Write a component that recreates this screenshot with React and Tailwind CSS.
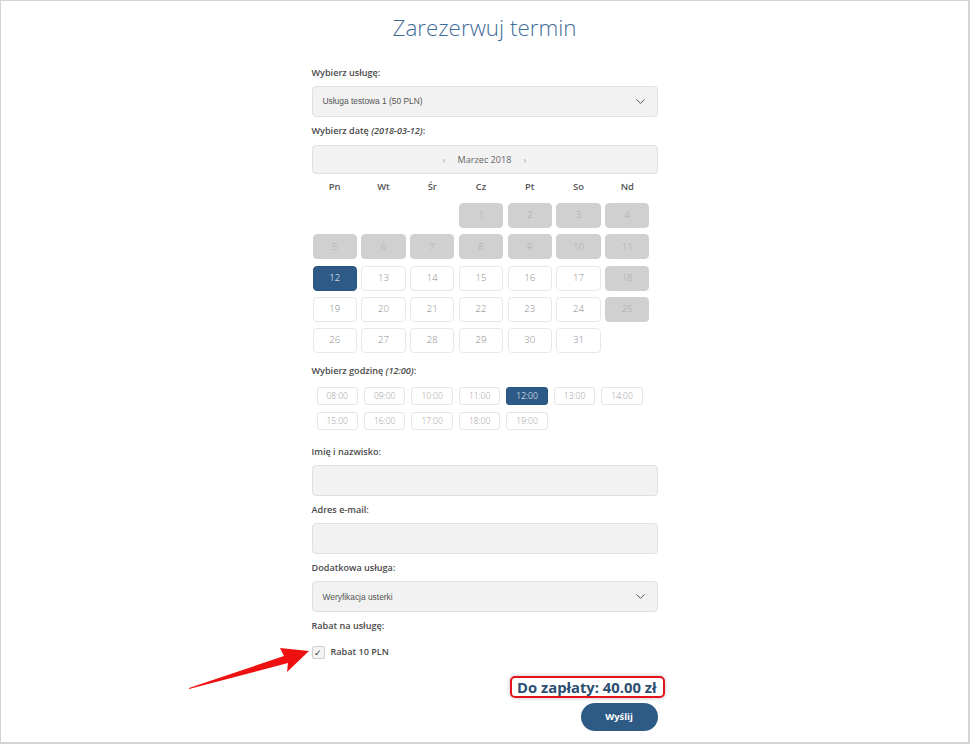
import { ChevronDown } from 'lucide-react'

const days = ['Pn', 'Wt', 'Śr', 'Cz', 'Pt', 'So', 'Nd']
const disabledDays = [1, 2, 3, 4, 5, 6, 7, 8, 9, 10, 11, 18, 25]
const hours = ['08:00', '09:00', '10:00', '11:00', '12:00', '13:00', '14:00', '15:00', '16:00', '17:00', '18:00', '19:00']

function Label({ children, className = '' }) {
  return (
    <div className={`py-[6.5px] text-[9.1px] leading-[14px] font-semibold text-[#4a4a4a] ${className}`}>
      {children}
    </div>
  )
}

function SelectBox({ value }) {
  return (
    <div className="h-[31px] flex items-center justify-between pl-[10px] pr-[9px] bg-[#f2f2f2] border border-[#e0e0e0] rounded-[4px]">
      <span className="font-['Liberation_Sans',Arial,sans-serif] text-[8.4px] text-[#555]">{value}</span>
      <ChevronDown size={15} strokeWidth={1.6} className="text-[#555]" />
    </div>
  )
}

function DayCell({ day, selected }) {
  if (!day) return <div />
  const disabled = disabledDays.includes(day)
  let cls = 'bg-white border-[#e8e8e8] text-[#8a8a8a]'
  if (disabled) cls = 'bg-[#d0d0d0] border-[#d0d0d0] text-[#ababab]'
  if (selected) cls = 'bg-[#2d5a86] border-[#2a5580] text-white'
  return (
    <div className={`h-[25px] flex items-center justify-center rounded-[4px] border text-[9.6px] font-light ${cls}`}>
      {day}
    </div>
  )
}

export default function App() {
  const cells = [null, null, null, ...Array.from({ length: 31 }, (_, i) => i + 1)]

  return (
    <div className="relative w-[970px] h-[744px] bg-white border-t border-l border-r-2 border-b-2 border-[#d4d4d4] overflow-hidden font-['Open_Sans',sans-serif]">
      <div className="w-[346px] mx-auto">
        <div className="pt-[12px] h-[58px] text-center text-[22.4px] leading-[29px] font-light text-[#3f6d99]">
          Zarezerwuj termin
        </div>

        <Label>Wybierz usługę:</Label>
        <SelectBox value="Usługa testowa 1 (50 PLN)" />

        <Label>Wybierz datę <i>(2018-03-12)</i>:</Label>
        <div className="mt-px h-[29px] flex items-center justify-center gap-[12px] bg-[#f2f2f2] border border-[#e0e0e0] rounded-[4px] text-[9.1px] text-[#666]">
          <span className="text-[#999]">‹</span>
          <span>Marzec 2018</span>
          <span className="text-[#999]">›</span>
        </div>

        <div className="mt-[6px] ml-px w-[337px] grid grid-cols-7 gap-x-[4.3px]">
          {days.map(d => (
            <div key={d} className="text-center text-[9.4px] leading-[14px] font-semibold text-[#555]">{d}</div>
          ))}
        </div>
        <div className="mt-[9px] ml-px w-[337px] grid grid-cols-7 gap-x-[4.3px] gap-y-[6.3px]">
          {cells.map((d, i) => (
            <DayCell key={i} day={d} selected={d === 12} />
          ))}
        </div>

        <Label className="mt-[4px]">Wybierz godzinę <i>(12:00)</i>:</Label>
        <div className="mt-[3px] pl-[5px] flex flex-wrap gap-x-[6.2px] gap-y-[7.3px]">
          {hours.map(h => (
            <div key={h}
              className={`w-[41.3px] h-[18px] flex items-center justify-center rounded-[3px] border text-[8.5px] font-light
                ${h === '12:00' ? 'bg-[#2d5a86] border-[#2a5580] text-white' : 'bg-white border-[#e6e6e6] text-[#999]'}`}>
              {h}
            </div>
          ))}
        </div>

        <Label className="mt-[8px]">Imię i nazwisko:</Label>
        <div className="h-[31px] bg-[#f2f2f2] border border-[#e0e0e0] rounded-[4px]" />

        <Label>Adres e-mail:</Label>
        <div className="h-[31px] bg-[#f2f2f2] border border-[#e0e0e0] rounded-[4px]" />

        <Label>Dodatkowa usługa:</Label>
        <SelectBox value="Weryfikacja usterki" />

        <Label>Rabat na usługę:</Label>
        <div className="mt-[6px] flex items-center gap-[6px]">
          <div className="w-[13px] h-[13px] flex items-center justify-center rounded-[2px] border border-[#cfcfcf] bg-[#f4f4f4] text-[9px] leading-none text-[#333]">
            ✓
          </div>
          <span className="text-[9.1px] font-semibold text-[#4a4a4a]">Rabat 10 PLN</span>
        </div>

        <div className="mt-[17px] flex justify-end">
          <span className="relative mr-px text-[14.8px] leading-[22px] font-bold text-[#2b4e72]">
            Do zapłaty: 40.00 zł
            <span className="absolute -left-[7px] -right-[8px] top-0 bottom-0 border-2 border-[#e3141b] rounded-[5px] shadow-[0_0_4px_rgba(0,0,0,0.25)]" />
          </span>
        </div>

        <div className="mt-[5px] flex justify-end">
          <button className="w-[77px] h-[28px] rounded-full bg-[#2e5b86] text-white text-[9.4px] font-bold">
            Wyślij
          </button>
        </div>
      </div>

      <svg className="absolute left-[185px] top-[638px]" width="130" height="52" viewBox="0 0 130 52">
        <polygon points="3,49 98,17 94,9 123,12 101,33 102,24 3,50" fill="#ee1111" />
      </svg>
    </div>
  )
}
